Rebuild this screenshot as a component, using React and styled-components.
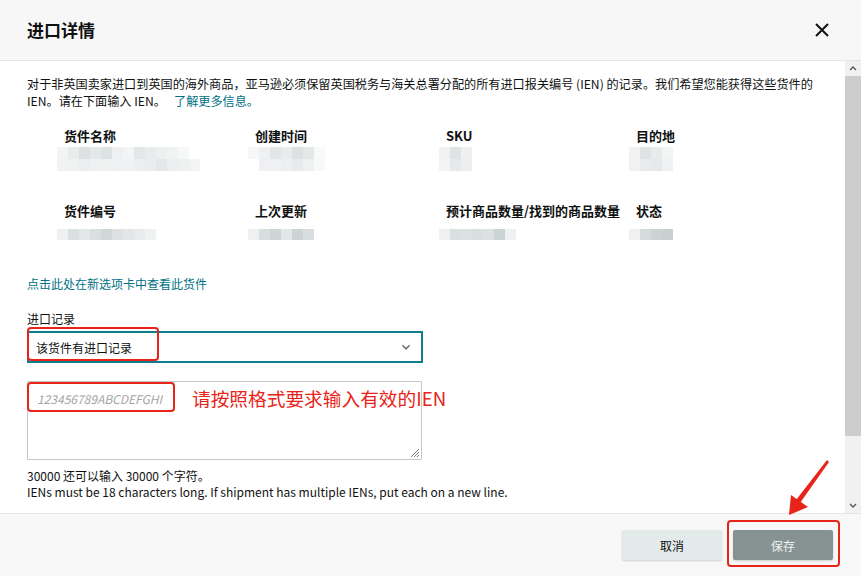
import React from "react";
import styled, { createGlobalStyle } from "styled-components";

const colours = {
  text: "#0f1111",
  teal: "#007185",
  border: "#d5d9d9",
  headerBg: "#f7f7f7",
  red: "#e8231a",
};

const GlobalStyle = createGlobalStyle`
  html, body {
    margin: 0;
    padding: 0;
    background: #ffffff;
    overflow: hidden;
  }
  body {
    font-family: "Noto Sans CJK SC", "Noto Sans", sans-serif;
    color: ${colours.text};
  }
`;

const Modal = styled.div`
  position: relative;
  width: 861px;
  height: 576px;
  display: flex;
  flex-direction: column;
  background: #ffffff;
`;

const Header = styled.div`
  height: 60px;
  flex: none;
  display: flex;
  align-items: center;
  justify-content: space-between;
  padding: 0 31px 0 27px;
  background: ${colours.headerBg};
  border-bottom: 1px solid #e3e6e6;
`;

const Title = styled.h1`
  margin: 0;
  font-size: 17px;
  font-weight: 700;
  line-height: 24px;
`;

const CloseButton = styled.button`
  border: 0;
  background: none;
  padding: 0;
  width: 16px;
  height: 16px;
  display: flex;
  cursor: pointer;
`;

const Body = styled.div`
  flex: 1;
  display: flex;
  min-height: 0;
`;

const Content = styled.div`
  flex: 1;
  padding: 14px 27px 0 27px;
  font-size: 12px;
`;

const Intro = styled.p`
  margin: 0;
  line-height: 17px;
  font-size: 12.15px;
`;

const Link = styled.a`
  color: ${colours.teal};
  text-decoration: none;
  cursor: pointer;
`;

const FieldGrid = styled.div`
  display: grid;
  grid-template-columns: 191px 191px 190px 150px;
  row-gap: 15px;
  padding-left: 37px;
  margin-top: 19px;
`;

const Field = styled.div`
  min-height: 60px;
`;

const FieldLabel = styled.div`
  font-size: 13px;
  font-weight: 700;
  line-height: 16px;
  white-space: nowrap;
`;

const Pixels = styled.div`
  display: grid;
  grid-template-columns: repeat(${(props) => props.cols}, 11px);
  grid-auto-rows: ${(props) => props.rowHeight}px;
  margin: ${(props) => props.top}px 0 0 -7px;
`;

const Pixel = styled.span`
  background: ${(props) => props.shade};
`;

const ShipmentLink = styled(Link)`
  display: block;
  margin-top: 12px;
  line-height: 17px;
`;

const InputLabel = styled.div`
  margin-top: 18px;
  line-height: 17px;
`;

const SelectBox = styled.div`
  position: relative;
  margin-top: 4px;
  width: 396px;
  height: 32px;
  box-sizing: border-box;
  border: 2px solid #0f7d8c;
  display: flex;
  align-items: center;
  justify-content: space-between;
  padding: 0 10px 0 7px;
  font-size: 12px;
`;

const TextAreaWrap = styled.div`
  position: relative;
  margin-top: 18px;
  width: 395px;
  height: 79px;
  box-sizing: border-box;
  border: 1px solid #c4c8c8;
  border-radius: 1px;
`;

const Placeholder = styled.span`
  position: absolute;
  left: 9px;
  top: 8px;
  font-size: 12px;
  font-style: italic;
  color: #a2a6a6;
  line-height: 17px;
`;

const Grip = styled.svg`
  position: absolute;
  right: 1px;
  bottom: 1px;
`;

const Annotation = styled.span`
  position: absolute;
  left: 164px;
  top: 2px;
  font-size: 18.7px;
  line-height: 27px;
  color: ${colours.red};
  white-space: nowrap;
`;

const Highlight = styled.div`
  position: absolute;
  left: ${(props) => props.left}px;
  top: ${(props) => props.top}px;
  width: ${(props) => props.w}px;
  height: ${(props) => props.h}px;
  box-sizing: border-box;
  border: 2px solid ${colours.red};
  border-radius: 4px;
  pointer-events: none;
`;

const Hint = styled.div`
  margin-top: ${(props) => (props.first ? 8 : 0)}px;
  line-height: 16px;
  white-space: nowrap;
`;

const Scrollbar = styled.div`
  width: 16px;
  flex: none;
  display: flex;
  flex-direction: column;
  background: #f1f1f1;
`;

const ScrollArrow = styled.div`
  height: 15px;
  flex: none;
  display: flex;
  align-items: center;
  justify-content: center;
`;

const Thumb = styled.div`
  height: 360px;
  background: #cdcdcd;
`;

const Track = styled.div`
  flex: 1;
`;

const Footer = styled.div`
  height: 63px;
  flex: none;
  display: flex;
  align-items: center;
  justify-content: flex-end;
  gap: 11px;
  padding-right: 28px;
  background: #f8f8f8;
  border-top: 1px solid #e3e6e6;
  box-sizing: border-box;
`;

const Button = styled.button`
  position: relative;
  width: 100px;
  height: 30px;
  border: 0;
  border-radius: 2px;
  font-family: inherit;
  font-size: 12px;
  background: ${(props) => (props.primary ? "#879393" : "#e3eaea")};
  color: ${(props) => (props.primary ? "#eef2f2" : colours.text)};
  box-shadow: 0 1px 2px rgba(15, 17, 17, 0.18);
  cursor: pointer;
`;

const ArrowOverlay = styled.svg`
  position: absolute;
  left: 0;
  top: 0;
  pointer-events: none;
`;

const fieldsTop = [
  {
    label: "货件名称",
    cols: 13,
    rows: [
      ["#f3f5f5", "#e9ecec", "#dde1e2", "#e5e8e9", "#dde2e3", "#eef0f1", "#f3f4f5", "#e3e7e8", "#e9eced", "#edf0f0", "#f1f3f3", "#f6f7f7", "#ffffff"],
      ["#f1f3f3", "#eff1f2", "#ebeeee", "#eef0f1", "#f0f2f2", "#eef0f1", "#eff1f2", "#eceff0", "#eaeded", "#e5e8e9", "#eceff0", "#eff1f1", "#f2f4f4"],
    ],
  },
  {
    label: "创建时间",
    cols: 7,
    rows: [
      ["#f6f7f7", "#eef0f1", "#e2e6e7", "#e9eced", "#dde1e2", "#e4e8e9", "#f8f9f9"],
      ["#ffffff", "#eef0f1", "#eff1f2", "#eceff0", "#e8ebec", "#eef0f1", "#f7f8f8"],
    ],
  },
  {
    label: "SKU",
    cols: 3,
    rows: [
      ["#f0f2f2", "#dfe3e4", "#eef0f1"],
      ["#f3f5f5", "#e6e9ea", "#eceeef"],
    ],
  },
  {
    label: "目的地",
    cols: 5,
    rows: [
      ["#f1f3f3", "#dfe3e4", "#e8ebec", "#f3f5f5", "#ffffff"],
      ["#f1f3f3", "#e8ebec", "#e6e9ea", "#eef0f1", "#ffffff"],
    ],
  },
];

const fieldsBottom = [
  {
    label: "货件编号",
    cols: 9,
    rows: [["#eef0f1", "#dadfe0", "#e3e7e8", "#dadfe0", "#d1d7d8", "#dde1e2", "#e2e6e7", "#e8ebec", "#f0f2f2"]],
  },
  {
    label: "上次更新",
    cols: 6,
    rows: [["#eef0f1", "#d8dddf", "#cfd5d7", "#e3e7e8", "#ced4d6", "#d8dddf"]],
  },
  {
    label: "预计商品数量/找到的商品数量",
    cols: 7,
    rows: [["#eef0f1", "#dadfe0", "#dde1e2", "#d9dee0", "#dde1e2", "#ccd3d5", "#eef0f1"]],
  },
  {
    label: "状态",
    cols: 4,
    rows: [["#eef0f1", "#d6dbdd", "#ccd3d5", "#c9d0d2"]],
  },
];

const BlurredValue = ({ cols, rows, rowHeight, top }) => (
  <Pixels cols={cols} rowHeight={rowHeight} top={top}>
    {rows.flat().map((shade, i) => (
      <Pixel key={i} shade={shade} />
    ))}
  </Pixels>
);

const Chevron = ({ up, size = 8, colour = "#505656" }) => (
  <svg width={size} height={size / 2 + 1} viewBox="0 0 8 5">
    <path
      d={up ? "M1 4 L4 1 L7 4" : "M1 1 L4 4 L7 1"}
      fill="none"
      stroke={colour}
      strokeWidth="1.3"
    />
  </svg>
);

export default function App() {
  return (
    <>
      <GlobalStyle />
      <Modal>
        <Header>
          <Title>进口详情</Title>
          <CloseButton aria-label="关闭">
            <svg width="16" height="16" viewBox="0 0 16 16">
              <path d="M2 2 L14 14 M14 2 L2 14" stroke="#0f1111" strokeWidth="2" />
            </svg>
          </CloseButton>
        </Header>

        <Body>
          <Content>
            <Intro>
              对于非英国卖家进口到英国的海外商品，亚马逊必须保留英国税务与海关总署分配的所有进口报关编号 (IEN)
              的记录。我们希望您能获得这些货件的IEN。请在下面输入 IEN。{"\u00a0\u00a0 "}
              <Link>了解更多信息。</Link>
            </Intro>

            <FieldGrid>
              {fieldsTop.map((f) => (
                <Field key={f.label}>
                  <FieldLabel>{f.label}</FieldLabel>
                  <BlurredValue cols={f.cols} rows={f.rows} rowHeight={12} top={3} />
                </Field>
              ))}
              {fieldsBottom.map((f) => (
                <Field key={f.label}>
                  <FieldLabel>{f.label}</FieldLabel>
                  <BlurredValue cols={f.cols} rows={f.rows} rowHeight={11} top={10} />
                </Field>
              ))}
            </FieldGrid>

            <ShipmentLink>点击此处在新选项卡中查看此货件</ShipmentLink>

            <InputLabel>进口记录</InputLabel>
            <SelectBox>
              <span>该货件有进口记录</span>
              <Chevron size={10} colour="#6f7373" />
              <Highlight left={-2} top={-6} w={132} h={34} />
            </SelectBox>

            <TextAreaWrap>
              <Placeholder>123456789ABCDEFGHI</Placeholder>
              <Highlight left={-1} top={0} w={148} h={30} />
              <Annotation>请按照格式要求输入有效的IEN</Annotation>
              <Grip width="11" height="11" viewBox="0 0 11 11">
                <path d="M10 2 L2 10 M10 5 L5 10 M10 8 L8 10" stroke="#7a7f7f" strokeWidth="1" />
              </Grip>
            </TextAreaWrap>

            <Hint first>30000 还可以输入 30000 个字符。</Hint>
            <Hint>
              IENs must be 18 characters long. If shipment has multiple IENs, put each on a new line.
            </Hint>
          </Content>

          <Scrollbar>
            <ScrollArrow>
              <Chevron up />
            </ScrollArrow>
            <Thumb />
            <Track />
            <ScrollArrow>
              <Chevron />
            </ScrollArrow>
          </Scrollbar>
        </Body>

        <Footer>
          <Button>取消</Button>
          <Button primary>
            保存
            <Highlight left={-6} top={-10} w={113} h={47} />
          </Button>
        </Footer>

        <ArrowOverlay width="861" height="576" viewBox="0 0 861 576">
          <polygon points="827,460 829,462 800,503 796,500" fill={colours.red} />
          <polygon points="789,515 791,495 808,507" fill={colours.red} />
        </ArrowOverlay>
      </Modal>
    </>
  );
}
